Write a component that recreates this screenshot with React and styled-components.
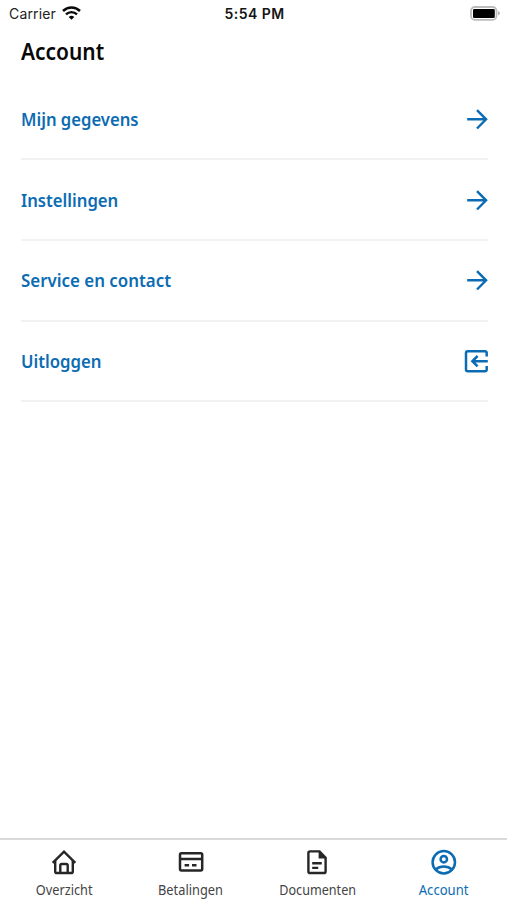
import React from 'react';
import styled, { createGlobalStyle } from 'styled-components';

const GlobalStyle = createGlobalStyle`
  * { box-sizing: border-box; }
  body { margin: 0; background: #fff; }
`;

const Screen = styled.div`
  height: 100vh;
  display: flex;
  flex-direction: column;
  background: #fff;
  color: #080808;
  font-family: 'Noto Sans', 'Open Sans', sans-serif;
  overflow: hidden;
`;

const StatusBar = styled.header`
  height: 28px;
  flex: none;
  display: grid;
  grid-template-columns: 1fr auto 1fr;
  align-items: center;
  padding: 0 7px 1px 9px;
  font: 400 14px/20px Inter, sans-serif;
  color: #222;
`;

const Carrier = styled.div`
  display: flex;
  align-items: center;
  gap: 6px;
  letter-spacing: 0.15px;
  svg { margin-bottom: 2px; }
`;

const Clock = styled.time`
  font-weight: 600;
  letter-spacing: 0.45px;
  color: #151515;
`;

const Battery = styled.div`
  justify-self: end;
  display: flex;
`;

/* Narrows the letterforms horizontally around the chosen edge. */
const Label = styled.span`
  display: inline-block;
  white-space: nowrap;
  transform: scaleX(${(p) => p.$narrow});
  transform-origin: ${(p) => p.$origin || 'left'} center;
`;

const Title = styled.h1`
  flex: none;
  height: 51.8px;
  margin: 0;
  padding: 7.4px 21px 0;
  font-size: 23.5px;
  line-height: 32px;
  font-weight: 600;
`;

const Menu = styled.main`
  flex: 1;
  padding: 0 19px 0 21px;
`;

const MenuRow = styled.a`
  height: 80.67px;
  display: flex;
  align-items: center;
  justify-content: space-between;
  border-bottom: 2px solid #f2f2f2;
  color: #0c6cb3;
  font-size: 18.5px;
  line-height: 26px;
  font-weight: 600;
  svg { display: block; }
`;

const TabBar = styled.nav`
  flex: none;
  height: 62px;
  display: grid;
  grid-template-columns: repeat(4, 1fr);
  padding-left: 1px;
  border-top: 2px solid #d9d9d9;
`;

const Tab = styled.a`
  display: flex;
  flex-direction: column;
  align-items: center;
  padding-top: 9px;
  gap: 5px;
  color: ${(p) => (p.$active ? '#0c6cb3' : '#262626')};
  font-size: 14px;
  line-height: 20px;
  svg { display: block; }
`;

const TabLabel = styled(Label)`
  color: ${(p) => (p.$active ? '#0c6cb3' : '#444')};
`;

const WifiIcon = () => (
  <svg width="19" height="14" viewBox="0 0 19 14" fill="none" stroke="#0a0a0a">
    <path d="M1 5A12.2 12.2 0 0 1 18 5" strokeWidth="2.6" />
    <path d="M4 8.4A7.8 7.8 0 0 1 15 8.4" strokeWidth="2.4" />
    <path d="M9.5 13.7L6.7 11A4 4 0 0 1 12.3 11Z" fill="#0a0a0a" stroke="none" />
  </svg>
);

const BatteryIcon = () => (
  <svg width="30" height="15" viewBox="0 0 30 15">
    <rect x="1" y="1" width="25.5" height="12.8" rx="3.8" fill="#fff" stroke="#bcbcbc" strokeWidth="1.8" />
    <rect x="3" y="3" width="21.8" height="9" rx="1.3" fill="#000" />
    <path d="M28 5v4.6q2-.8 2-2.3T28 5Z" fill="#b5b5b5" />
  </svg>
);

const ArrowIcon = () => (
  <svg width="22" height="22" viewBox="0 0 22 22" fill="none" stroke="currentColor" strokeWidth="2.4">
    <path d="M1.2 11.3H20.2M11 2.1L20.1 11.3L11 20.5" />
  </svg>
);

const LogoutIcon = () => (
  <svg width="25" height="24" viewBox="0 0 25 24" fill="none" stroke="currentColor" strokeWidth="2.5">
    <path d="M23.7 7.4V4Q23.7 2.2 21.9 2.2H4.8Q3 2.2 3 4V20.4Q3 22.2 4.8 22.2H21.9Q23.7 22.2 23.7 20.4V17" />
    <path d="M24.8 12.2H9.6M14.6 7L9.4 12.2L14.6 17.4" />
  </svg>
);

const HomeIcon = () => (
  <svg width="26" height="26" viewBox="0 0 26 26" fill="none" stroke="currentColor" strokeWidth="2.4">
    <path d="M1.7 13.9L13 2.6L24.3 13.9" />
    <path d="M4.2 11.6V22.4Q4.2 24 5.8 24H20.2Q21.8 24 21.8 22.4V11.6" />
    <path d="M9.3 24V16.5Q9.3 15 10.8 15H15.2Q16.7 15 16.7 16.5V24" />
  </svg>
);

const CardIcon = () => (
  <svg width="26" height="26" viewBox="0 0 26 26" fill="none" stroke="currentColor" strokeWidth="2.5">
    <rect x="2" y="4.2" width="22.2" height="17.4" rx="1.5" />
    <path d="M2 10.1H24.2M6.6 16.3H11.1M14 16.3H18.5" />
  </svg>
);

const DocumentIcon = () => (
  <svg width="26" height="26" viewBox="0 0 26 26" fill="none" stroke="currentColor" strokeWidth="2.4">
    <path d="M15.5 2.4H6Q4.4 2.4 4.4 4V22.4Q4.4 24 6 24H20Q21.6 24 21.6 22.4V8.8Z" />
    <path d="M14.6 2V9.4H22Z" fill="currentColor" stroke="none" />
    <path d="M8.2 14.3H17.8M8.2 18.9H14.2" />
  </svg>
);

const AccountIcon = () => (
  <svg width="26" height="26" viewBox="0 0 26 26" fill="none" stroke="currentColor" strokeWidth="2.5">
    <circle cx="12.8" cy="13.3" r="11.2" />
    <circle cx="12.8" cy="10.2" r="3.2" />
    <path d="M4.6 20.6Q8.2 17.6 12.8 17.6T21 20.6" />
  </svg>
);

const rows = [
  { text: 'Mijn gegevens', narrow: 0.9, Icon: ArrowIcon },
  { text: 'Instellingen', narrow: 0.902, Icon: ArrowIcon },
  { text: 'Service en contact', narrow: 0.913, Icon: ArrowIcon },
  { text: 'Uitloggen', narrow: 0.904, Icon: LogoutIcon },
];

const tabs = [
  { text: 'Overzicht', narrow: 0.91, Icon: HomeIcon },
  { text: 'Betalingen', narrow: 0.915, Icon: CardIcon },
  { text: 'Documenten', narrow: 0.9, Icon: DocumentIcon },
  { text: 'Account', narrow: 0.935, Icon: AccountIcon, active: true },
];

export default function App() {
  return (
    <>
      <GlobalStyle />
      <Screen>
        <StatusBar>
          <Carrier>Carrier <WifiIcon /></Carrier>
          <Clock>5:54 PM</Clock>
          <Battery><BatteryIcon /></Battery>
        </StatusBar>
        <Title><Label $narrow={0.89}>Account</Label></Title>
        <Menu>
          {rows.map(({ text, narrow, Icon }) => (
            <MenuRow key={text}>
              <Label $narrow={narrow}>{text}</Label>
              <Icon />
            </MenuRow>
          ))}
        </Menu>
        <TabBar>
          {tabs.map(({ text, narrow, Icon, active }) => (
            <Tab key={text} $active={active}>
              <Icon />
              <TabLabel $narrow={narrow} $origin="center" $active={active}>{text}</TabLabel>
            </Tab>
          ))}
        </TabBar>
      </Screen>
    </>
  );
}
